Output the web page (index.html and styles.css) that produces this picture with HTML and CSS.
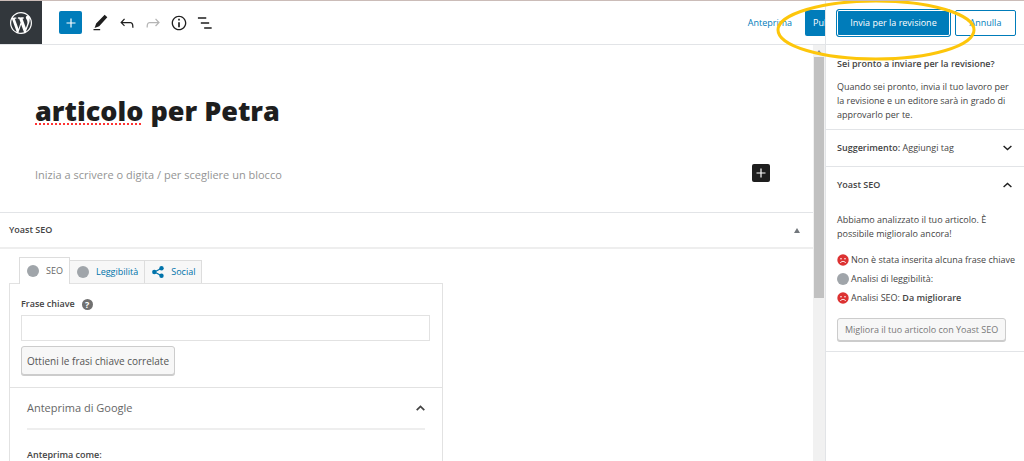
FILE: index.html
```
<!DOCTYPE html>
<html lang="it">
<head>
    <meta charset="UTF-8">
    <meta name="viewport" content="width=device-width, initial-scale=1.0">
    <title>Modifica articolo</title>
    <link rel="stylesheet" href="styles.css">
</head>

<body>
    <div class="editor">
        <header class="toolbar">
            <a href="#" class="wp-logo" aria-label="WordPress">
                <svg width="22" height="22" viewBox="0 0 20 20" fill="#fff"><path d="M20 10c0-5.51-4.49-10-10-10C4.48 0 0 4.49 0 10c0 5.52 4.48 10 10 10 5.51 0 10-4.48 10-10zM7.78 15.37L4.37 6.22c.55-.02 1.17-.08 1.17-.08.5-.06.44-1.13-.06-1.11 0 0-1.45.11-2.37.11-.18 0-.37 0-.58-.01C4.12 2.69 6.87 1.11 10 1.11c2.33 0 4.45.87 6.05 2.34-.68-.11-1.65.39-1.65 1.58 0 .74.45 1.36.9 2.1.35.61.55 1.36.55 2.46 0 1.49-1.4 5-1.4 5l-3.03-8.37c.54-.02.82-.17.82-.17.5-.05.44-1.25-.06-1.22 0 0-1.44.12-2.38.12-.87 0-2.33-.12-2.33-.12-.5-.03-.56 1.2-.06 1.22l.92.08 1.26 3.41zM17.41 10c.24-.64.74-1.87.43-4.25.7 1.29 1.05 2.71 1.05 4.25 0 3.29-1.73 6.24-4.4 7.78.97-2.59 1.94-5.2 2.92-7.78zM6.1 18.09C3.12 16.65 1.11 13.53 1.11 10c0-1.3.23-2.48.72-3.59C3.25 10.3 4.67 14.2 6.1 18.09zm4.03-6.63l2.58 6.98c-.86.29-1.76.45-2.71.45-.79 0-1.57-.11-2.29-.33.81-2.38 1.62-4.74 2.42-7.1z"/></svg>
            </a>
            <div class="tools">
                <button type="button" class="inserter" aria-label="Aggiungi blocco">
                    <svg width="18" height="18" viewBox="0 0 24 24" fill="#fff"><path d="M18 11.2h-5.2V6h-1.6v5.2H6v1.6h5.2V18h1.6v-5.2H18z"/></svg>
                </button>
                <button type="button" class="tool" aria-label="Strumenti">
                    <svg width="20" height="20" viewBox="0 0 24 24" fill="#1e1e1e"><path d="M19.600 5.200L16.400 2 6.200 12.700 4.300 18l5.500-2.200L19.600 5.200zM3 20.800h8v-1.600H3v1.600z"/></svg>
                </button>
                <button type="button" class="tool" aria-label="Annulla modifica">
                    <svg width="20" height="20" viewBox="0 0 24 24" fill="#1e1e1e"><path d="M18.3 11.7c-.6-.6-1.4-.9-2.3-.9H6.7l2.9-3.3-1.1-1-4.5 5L8.5 16l1-1-2.7-2.7H16c.5 0 .9.2 1.3.5 1 1 1 3.4 1 4.5v.3h1.5v-.2c0-1.5 0-4.3-1.5-5.7z"/></svg>
                </button>
                <button type="button" class="tool" aria-label="Ripeti" disabled>
                    <svg width="20" height="20" viewBox="0 0 24 24" fill="#b5b5b5"><path d="M15.6 6.5l-1.1 1 2.9 3.3H8c-.9 0-1.7.3-2.3.9-1.4 1.5-1.4 4.2-1.4 5.6v.2h1.5v-.3c0-1.1 0-3.5 1-4.5.3-.3.7-.5 1.3-.5h9.2L14.5 15l1.1 1.1 4.6-4.6-4.6-5z"/></svg>
                </button>
                <button type="button" class="tool" aria-label="Dettagli">
                    <svg width="20" height="20" viewBox="0 0 24 24" fill="#1e1e1e"><path d="M12 3.2c-4.8 0-8.8 3.9-8.8 8.8 0 4.8 3.9 8.8 8.8 8.8 4.8 0 8.8-3.9 8.8-8.8 0-4.8-4-8.8-8.8-8.8zm0 16c-4 0-7.2-3.3-7.2-7.2C4.8 8 8 4.8 12 4.8s7.2 3.3 7.2 7.2c0 4-3.2 7.2-7.2 7.2zM11 17h2v-6h-2v6zm0-8h2V7h-2v2z"/></svg>
                </button>
                <button type="button" class="tool" aria-label="Navigazione blocchi">
                    <svg width="20" height="20" viewBox="0 0 24 24" fill="#1e1e1e"><path d="M3.500 5.200h10v1.600h-10zM7 11.200h10v1.600H7zM11 17.200h9v1.600h-9z"/></svg>
                </button>
            </div>
            <a href="#" class="preview">Anteprima</a>
            <button type="button" class="publish">Pubblica</button>
        </header>

        <div class="workspace">
            <main class="content">
                <div class="post">
                    <h1><span class="misspelled">articolo</span> per Petra</h1>
                    <div class="block">
                        <p>Inizia a scrivere o digita / per scegliere un blocco</p>
                        <button type="button" class="add-block" aria-label="Aggiungi blocco">
                            <svg width="18" height="18" viewBox="0 0 24 24" fill="#fff"><path d="M18 11.2h-5.2V6h-1.6v5.2H6v1.6h5.2V18h1.6v-5.2H18z"/></svg>
                        </button>
                    </div>
                </div>

                <section class="metabox">
                    <div class="metabox-title">
                        <h2>Yoast SEO</h2>
                        <svg width="6" height="5" viewBox="0 0 6 5" fill="#72777c"><path d="M3 0l3 5H0z"/></svg>
                    </div>
                    <nav class="tabs">
                        <a href="#" class="tab active"><span class="dot"></span>SEO</a>
                        <a href="#" class="tab"><span class="dot"></span>Leggibilità</a>
                        <a href="#" class="tab">
                            <svg width="12" height="12" viewBox="0 0 12 12" fill="#0073aa"><path d="M2.500 6L9.500 2.300M2.500 6l7 3.700" stroke="#0073aa" stroke-width="1.300"/><circle cx="2.300" cy="6" r="2.200"/><circle cx="9.500" cy="2.300" r="2.200"/><circle cx="9.500" cy="9.700" r="2.200"/></svg>
                            Social
                        </a>
                    </nav>
                    <div class="panel">
                        <div class="keyphrase">
                            <div class="label-row">
                                <label for="keyphrase">Frase chiave</label>
                                <span class="help">?</span>
                            </div>
                            <input type="text" id="keyphrase">
                            <button type="button" class="button">Ottieni le frasi chiave correlate</button>
                        </div>
                        <div class="snippet">
                            <button type="button" class="snippet-title">
                                Anteprima di Google
                                <svg width="9" height="6" viewBox="0 0 9 6" fill="none" stroke="#444" stroke-width="1.700"><path d="M.7 5.200L4.500 1.400l3.800 3.800"/></svg>
                            </button>
                            <h3>Anteprima come:</h3>
                        </div>
                    </div>
                </section>
            </main>
            <div class="scrollbar">
                <svg width="6" height="4" viewBox="0 0 6 4" fill="#888"><path d="M3 0l3 4H0z"/></svg>
                <div class="thumb"></div>
            </div>
        </div>
    </div>

    <aside class="sidebar">
        <div class="actions">
            <button type="button" class="submit">Invia per la revisione</button>
            <button type="button" class="cancel">Annulla</button>
            <svg class="highlight" width="202" height="64" viewBox="0 0 202 64" fill="none" stroke="#fdc60b" stroke-width="3"><ellipse cx="101" cy="32" rx="98" ry="29"/></svg>
        </div>
        <section class="ready">
            <h2>Sei pronto a inviare per la revisione?</h2>
            <p>Quando sei pronto, invia il tuo lavoro per la revisione e un editore sarà in grado di approvarlo per te.</p>
        </section>
        <section>
            <button type="button" class="toggle">
                <span><b>Suggerimento:</b> Aggiungi tag</span>
                <svg width="9" height="6" viewBox="0 0 9 6" fill="none" stroke="#1e1e1e" stroke-width="1.400"><path d="M.6 1l3.900 3.500L8.400 1"/></svg>
            </button>
        </section>
        <section>
            <button type="button" class="toggle">
                <b>Yoast SEO</b>
                <svg width="9" height="6" viewBox="0 0 9 6" fill="none" stroke="#1e1e1e" stroke-width="1.400"><path d="M.6 5l3.900-3.500L8.400 5"/></svg>
            </button>
            <div class="analysis">
                <p>Abbiamo analizzato il tuo articolo. È possibile miglioralo ancora!</p>
                <ul>
                    <li>
                        <svg width="12" height="12" viewBox="0 0 12 12"><circle cx="6" cy="6" r="5.700" fill="#dc3232"/><circle cx="4" cy="4.700" r=".8" fill="#fff"/><circle cx="8" cy="4.700" r=".8" fill="#fff"/><path d="M3.300 9C4.300 6.900 7.700 6.900 8.700 9" fill="none" stroke="#fff"/></svg>
                        Non è stata inserita alcuna frase chiave
                    </li>
                    <li><span class="dot"></span>Analisi di leggibilità:</li>
                    <li>
                        <svg width="12" height="12" viewBox="0 0 12 12"><circle cx="6" cy="6" r="5.700" fill="#dc3232"/><circle cx="4" cy="4.700" r=".8" fill="#fff"/><circle cx="8" cy="4.700" r=".8" fill="#fff"/><path d="M3.300 9C4.300 6.900 7.700 6.900 8.700 9" fill="none" stroke="#fff"/></svg>
                        <span>Analisi SEO: <b>Da migliorare</b></span>
                    </li>
                </ul>
                <button type="button" class="button muted">Migliora il tuo articolo con Yoast SEO</button>
            </div>
        </section>
    </aside>
</body>
</html>
```
FILE: styles.css
```
* {
    box-sizing: border-box;
}

body {
    font-family: "Open Sans", "Noto Sans", sans-serif;
    font-size: 9px;
    line-height: 14px;
    color: #444;
    background: #fff;
    margin: 0;
    height: 100vh;
    display: flex;
    overflow: hidden;
    border-top: 1px solid #cbbcb8;
}

h1, h2, h3, p, ul {
    margin: 0;
    padding: 0;
}

button {
    font-family: inherit;
    font-size: inherit;
    line-height: inherit;
    color: inherit;
    background: none;
    border: none;
    padding: 0;
    cursor: pointer;
}

a {
    color: #0073aa;
    text-decoration: none;
}

b, h2, h3 {
    font-size: inherit;
    font-weight: 600;
}

svg {
    display: block;
    flex-shrink: 0;
}

/* editor */
.editor {
    flex: 1;
    min-width: 0;
    display: flex;
    flex-direction: column;
}

.toolbar {
    flex: 0 0 44px;
    display: flex;
    align-items: center;
    overflow: hidden;
    border-bottom: 1px solid #e2e4e7;
}

.wp-logo {
    width: 42px;
    height: 44px;
    display: flex;
    align-items: center;
    justify-content: center;
    background: #32373c;
    flex-shrink: 0;
}

.tools {
    flex: 1;
    display: flex;
    align-items: center;
    gap: 6px;
    padding-left: 17px;
}

.inserter {
    width: 23px;
    height: 23px;
    margin-right: 3px;
    display: flex;
    align-items: center;
    justify-content: center;
    background: #007cba;
    border-radius: 2px;
}

.preview {
    margin-right: 13px;
    color: #007cba;
}

.publish {
    height: 26px;
    width: 20px;
    padding-left: 8px;
    overflow: hidden;
    text-align: left;
    background: #007cba;
    color: #fff;
    border-radius: 2px 0 0 2px;
}

.workspace {
    flex: 1;
    min-height: 0;
    display: flex;
}

.content {
    flex: 1;
    min-width: 0;
    overflow: hidden;
}

.scrollbar {
    width: 12px;
    display: flex;
    flex-direction: column;
    align-items: center;
    gap: 3px;
    padding-top: 5px;
    background: #f1f1f1;
}

.thumb {
    width: 10px;
    height: 241px;
    background: #c1c1c1;
}

.post {
    padding: 46px 43px 27px 35px;
}

h1 {
    font-size: 27px;
    line-height: 40px;
    font-weight: 800;
    color: #1e1e1e;
}

.misspelled {
    text-decoration: underline dotted #f33 2px;
    text-decoration-skip-ink: none;
    text-underline-offset: 2px;
}

.block {
    display: flex;
    justify-content: space-between;
    align-items: center;
    margin-top: 30px;
    font-size: 11px;
    line-height: 20px;
    color: #949494;
}

.block p {
    padding-top: 4px;
}

.add-block {
    width: 18px;
    height: 18px;
    background: #1e1e1e;
    border-radius: 2px;
}

/* yoast box */
.metabox {
    border-top: 1px solid #e2e4e7;
}

.metabox-title {
    height: 36px;
    display: flex;
    align-items: center;
    justify-content: space-between;
    padding: 0 13px 0 9px;
    border-bottom: 2px solid #eee;
}

.tabs {
    display: flex;
    align-items: flex-end;
    padding: 8px 0 0 19px;
}

.tab {
    height: 23px;
    display: flex;
    align-items: center;
    gap: 7px;
    padding: 0 6px 0 7px;
    background: #f7f7f7;
    border: 1px solid #ddd;
    border-left: none;
    border-bottom: none;
}

.tab.active {
    height: 27px;
    margin-bottom: -1px;
    background: #fff;
    border-left: 1px solid #ddd;
    color: #666;
    position: relative;
}

.dot {
    width: 12px;
    height: 12px;
    border-radius: 50%;
    background: #a0a5aa;
    flex-shrink: 0;
}

.panel {
    max-width: 434px;
    margin-left: 9px;
    border: 1px solid #e2e2e2;
}

.keyphrase {
    padding: 12px 12px 12px 11px;
    border-bottom: 1px solid #e2e2e2;
}

.label-row {
    display: flex;
    align-items: center;
    gap: 7px;
    height: 16px;
    margin-bottom: 3px;
    font-weight: 600;
}

.help {
    width: 11px;
    height: 11px;
    border-radius: 50%;
    background: #707070;
    color: #fff;
    line-height: 11px;
    font-weight: 700;
    text-align: center;
}

input {
    display: block;
    width: 100%;
    height: 26px;
    margin-bottom: 5px;
    border: 1px solid #e2e2e2;
    font: inherit;
}

.button {
    height: 29px;
    padding: 0 5px;
    background: #f7f7f7;
    border: 1px solid #ccc;
    border-radius: 3px;
    box-shadow: 0 1px 0 #ccc;
    color: #555;
    font-size: 10px;
}

.snippet {
    padding: 0 17px;
}

.snippet-title {
    width: 100%;
    height: 42px;
    display: flex;
    align-items: center;
    justify-content: space-between;
    border-bottom: 2px solid #eee;
    font-size: 11px;
    color: #666;
}

.snippet h3 {
    margin: 18px 0;
}

/* publish sidebar */
.sidebar {
    flex: 0 0 199px;
    min-width: 0;
    border-left: 1px solid #e2e4e7;
}

.actions {
    position: relative;
    height: 44px;
    display: flex;
    align-items: center;
    justify-content: space-between;
    padding: 0 8px 0 10px;
    border-bottom: 1px solid #e2e4e7;
}

.submit {
    width: 115px;
    height: 28px;
    background: #007cba;
    border: 1px solid #007cba;
    border-radius: 3px;
    box-shadow: inset 0 0 0 1px #fff;
    color: #fff;
}

.cancel {
    width: 61px;
    height: 26px;
    border: 1px solid #007cba;
    border-radius: 2px;
    color: #007cba;
}

.highlight {
    position: absolute;
    top: -3px;
    right: 47px;
    z-index: 2;
    pointer-events: none;
}

.sidebar section {
    border-bottom: 1px solid #e2e4e7;
}

.ready {
    padding: 12px 8px 7px 11px;
}

.ready p {
    margin-top: 9px;
}

.toggle {
    width: 100%;
    height: 36px;
    display: flex;
    align-items: center;
    justify-content: space-between;
    padding: 0 12px 0 11px;
}

.analysis {
    padding: 10px 11px;
}

.analysis p {
    padding-right: 20px;
}

ul {
    list-style: none;
    margin: 9px 0 11px;
}

li {
    display: flex;
    align-items: center;
    gap: 2px;
    height: 19px;
    white-space: nowrap;
}

.button.muted {
    height: 23px;
    padding: 0 7px;
    font-size: 9px;
    color: #777;
}
```
